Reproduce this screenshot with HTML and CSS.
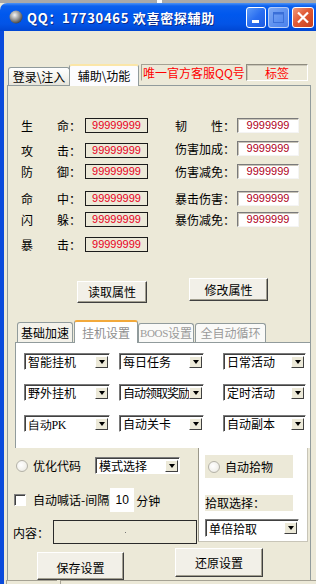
FILE: index.html
```html
<!DOCTYPE html>
<html>
<head>
    <meta charset="UTF-8">
    <link rel="stylesheet" href="styles.css">
</head>
<body>
    <div class="topstrip"><span class="handle"></span></div>

    <div class="titlebar">
        <svg class="app-icon" width="14" height="14" viewBox="0 0 14 14">
            <defs>
                <radialGradient id="ball" cx="40%" cy="35%" r="70%">
                    <stop offset="0" stop-color="#f6f6f6"/>
                    <stop offset="0.5" stop-color="#9c9c9c"/>
                    <stop offset="1" stop-color="#3a3a3a"/>
                </radialGradient>
            </defs>
            <circle cx="7" cy="7" r="6.5" fill="url(#ball)"/>
        </svg>
        <span class="title">QQ：17730465 欢喜密探辅助</span>
        <div class="caption-btns">
            <span class="cbtn cbtn-min">
                <svg width="18" height="19" viewBox="0 0 18 19"><rect x="5" y="12" width="7" height="3" fill="#fff"/></svg>
            </span>
            <span class="cbtn cbtn-max">
                <svg width="19" height="19" viewBox="0 0 19 19"><rect x="4.5" y="4.5" width="10" height="10" fill="none" stroke="#3a6fd8" stroke-width="1"/><rect x="4.5" y="4.5" width="10" height="2" fill="#3a6fd8"/></svg>
            </span>
            <span class="cbtn cbtn-close">
                <svg width="20" height="19" viewBox="0 0 20 19"><path d="M5 4.5 L15 14.5 M15 4.5 L5 14.5" stroke="#fff" stroke-width="2.2"/></svg>
            </span>
        </div>
    </div>

    <div class="client">
        <div class="tabs">
            <span class="tab">登录\注入</span>
            <span class="tab tab-active">辅助\功能</span>
            <span class="qq-label">唯一官方客服QQ号</span>
            <span class="tag-box">标签</span>
        </div>

        <div class="panel">
            <div class="stats">
                <div class="stat-col stat-left">
                    <div class="stat-row"><span class="stat-name spread"><i>生</i><i>命：</i></span><span class="val-box">99999999</span></div>
                    <div class="stat-row"><span class="stat-name spread"><i>攻</i><i>击：</i></span><span class="val-box">99999999</span></div>
                    <div class="stat-row"><span class="stat-name spread"><i>防</i><i>御：</i></span><span class="val-box">99999999</span></div>
                    <div class="stat-row"><span class="stat-name spread"><i>命</i><i>中：</i></span><span class="val-box">99999999</span></div>
                    <div class="stat-row"><span class="stat-name spread"><i>闪</i><i>躲：</i></span><span class="val-box">99999999</span></div>
                    <div class="stat-row"><span class="stat-name spread"><i>暴</i><i>击：</i></span><span class="val-box">99999999</span></div>
                </div>
                <div class="stat-col stat-right">
                    <div class="stat-row"><span class="stat-name spread"><i>韧</i><i>性：</i></span><span class="edit-box">9999999</span></div>
                    <div class="stat-row"><span class="stat-name">伤害加成：</span><span class="edit-box">9999999</span></div>
                    <div class="stat-row"><span class="stat-name">伤害减免：</span><span class="edit-box">9999999</span></div>
                    <div class="stat-row"><span class="stat-name">暴击伤害：</span><span class="edit-box">9999999</span></div>
                    <div class="stat-row"><span class="stat-name">暴伤减免：</span><span class="edit-box">9999999</span></div>
                </div>
            </div>

            <div class="attr-btns">
                <span class="btn btn-read">读取属性</span>
                <span class="btn btn-write">修改属性</span>
            </div>

            <div class="subtabs">
                <span class="subtab">基础加速</span>
                <span class="subtab subtab-active">挂机设置</span>
                <span class="subtab subtab-dim"><span class="latin">BOOS</span>设置</span>
                <span class="subtab subtab-dim subtab-wide">全自动循环</span>
            </div>

            <div class="subpanel">
                <div class="combo-row">
                    <div class="combo c1"><span class="combo-text">智能挂机</span><span class="combo-arrow"></span></div>
                    <div class="combo c2"><span class="combo-text">每日任务</span><span class="combo-arrow"></span></div>
                    <div class="combo c3"><span class="combo-text">日常活动</span><span class="combo-arrow"></span></div>
                </div>
                <div class="combo-row">
                    <div class="combo c1"><span class="combo-text">野外挂机</span><span class="combo-arrow"></span></div>
                    <div class="combo c2"><span class="combo-text tight">自动领取奖励</span><span class="combo-arrow"></span></div>
                    <div class="combo c3"><span class="combo-text">定时活动</span><span class="combo-arrow"></span></div>
                </div>
                <div class="combo-row">
                    <div class="combo c1"><span class="combo-text"><span class="latin">自动PK</span></span><span class="combo-arrow"></span></div>
                    <div class="combo c2"><span class="combo-text">自动关卡</span><span class="combo-arrow"></span></div>
                    <div class="combo c3"><span class="combo-text">自动副本</span><span class="combo-arrow"></span></div>
                </div>
            </div>

            <div class="bottom">
                <div class="bottom-left">
                    <div class="opt-row">
                        <span class="radio"></span>
                        <span class="opt-text">优化代码</span>
                        <div class="combo c-mode"><span class="combo-text">模式选择</span><span class="combo-arrow"></span></div>
                    </div>
                    <div class="shout-row">
                        <span class="checkbox"></span>
                        <span class="opt-text">自动喊话-间隔</span>
                        <span class="num-input">10</span>
                        <span class="unit">分钟</span>
                    </div>
                    <div class="content-row">
                        <span>内容：</span>
                        <span class="content-box"><i class="dot"></i></span>
                    </div>
                </div>
                <div class="pick-group">
                    <div class="pick-radio"><span class="radio"></span><span class="opt-text">自动拾物</span></div>
                    <div class="pick-label">拾取选择：</div>
                    <div class="combo c-pick"><span class="combo-text">单倍拾取</span><span class="combo-arrow"></span></div>
                </div>
            </div>

            <div class="save-row">
                <span class="btn btn-save">保存设置</span>
                <span class="btn btn-reset">还原设置</span>
            </div>
        </div>

        <div class="statusbar">
            <span class="pane pane-first"></span>
            <span class="pane"></span>
        </div>
    </div>
</body>
</html>
```

FILE: styles.css
```css
* {
    box-sizing: border-box;
}

body {
    width: 316px;
    height: 584px;
    margin: 0;
    overflow: hidden;
    background: #ece9d8;
    font-family: "Noto Sans CJK SC", "Liberation Sans", sans-serif;
    font-size: 12px;
    color: #000;
}

i {
    font-style: normal;
}

/* strip above the window */
.topstrip {
    height: 3px;
    background: #a9a9a9;
}

.handle {
    display: block;
    width: 5px;
    height: 3px;
    margin-left: 157px;
    background: #fff;
}

/* title bar */
.titlebar {
    height: 28px;
    display: flex;
    align-items: center;
    padding-left: 9px;
    background: linear-gradient(to bottom, #4d93f6 0, #0c61ee 3px, #0058ee 40%, #0354e6 75%, #0046d2 100%);
    border-top-left-radius: 7px;
}

.app-icon {
    flex: none;
}

.title {
    margin-left: 4px;
    color: #fff;
    font-weight: bold;
    font-size: 13px;
    letter-spacing: 0.7px;
    white-space: nowrap;
    text-shadow: 1px 1px 0 #0a2a8c;
}

.caption-btns {
    margin-left: auto;
    display: flex;
    padding-right: 2px;
}

.cbtn {
    height: 21px;
    border: 1px solid #fff;
    border-radius: 3px;
    display: flex;
    align-items: center;
    justify-content: center;
}

.cbtn-min {
    width: 20px;
    background: linear-gradient(135deg, #5d9bf8 0%, #2a6ef0 50%, #1d5ae0 100%);
}

.cbtn-max {
    width: 21px;
    margin-left: 2px;
    border-color: rgba(255,255,255,0.55);
    background: linear-gradient(135deg, #7fa9f2 0%, #5b8ff0 60%, #4c82ec 100%);
}

.cbtn-close {
    width: 22px;
    margin-left: 3px;
    background: linear-gradient(135deg, #f09a7c 0%, #e05a36 45%, #c8401c 100%);
}

/* client area */
.client {
    height: 553px;
    border-left: 4px solid #0a4bdc;
    display: flex;
    flex-direction: column;
}

.tabs {
    height: 21px;
    margin: 33px 0 0 4px;
    display: flex;
    align-items: flex-end;
}

.tab {
    width: 62px;
    height: 18px;
    border: 1px solid #919b9c;
    border-bottom: none;
    border-radius: 3px 3px 0 0;
    background: linear-gradient(to bottom, #fff 0%, #f3f2ec 60%, #e6e4da 100%);
    display: flex;
    align-items: center;
    justify-content: center;
    line-height: 14px;
}

.tab-active {
    width: 70px;
    height: 22px;
    margin-left: -1px;
    margin-bottom: -1px;
    position: relative;
    z-index: 1;
    background: #fcfcfe;
    border-top: 2px solid #fbe6a8;
}

.qq-label {
    align-self: flex-start;
    width: 100px;
    height: 17px;
    margin-left: 2px;
    padding-left: 1px;
    border: 1px solid;
    border-color: #a5a294 #ece9d8 #ece9d8 #a5a294;
    color: #f00;
    line-height: 15px;
    white-space: nowrap;
}

.tag-box {
    align-self: flex-start;
    width: 62px;
    height: 17px;
    margin-left: 5px;
    border: 1px solid;
    border-color: #8e8b7e #fff #fff #8e8b7e;
    box-shadow: inset 1px 1px 0 #c9c6b8;
    color: #f00;
    text-align: center;
    line-height: 15px;
}

.panel {
    width: 304px;
    height: 495px;
    margin-left: 3px;
    border: 1px solid #919b9c;
    border-bottom: none;
    overflow: hidden;
}

/* attribute readout */
.stats {
    display: flex;
    padding: 32px 0 0 13px;
}

.stat-right {
    margin-left: 27px;
}

.stat-row {
    height: 15px;
    display: flex;
    align-items: center;
}

.stat-left .stat-row:nth-child(2),
.stat-left .stat-row:nth-child(6) {
    margin-top: 10px;
}

.stat-left .stat-row:nth-child(3),
.stat-left .stat-row:nth-child(5),
.stat-right .stat-row:nth-child(5) {
    margin-top: 6px;
}

.stat-left .stat-row:nth-child(4),
.stat-right .stat-row:nth-child(4) {
    margin-top: 12px;
}

.stat-right .stat-row:nth-child(2),
.stat-right .stat-row:nth-child(3) {
    margin-top: 8px;
}

.stat-name {
    width: 60px;
    line-height: 15px;
    white-space: nowrap;
}

.spread {
    display: flex;
    justify-content: space-between;
}

.val-box {
    width: 63px;
    height: 15px;
    margin-left: 4px;
    border: 1px solid #1c1c1c;
    color: #e8001c;
    font-family: "Liberation Sans", sans-serif;
    font-size: 11px;
    line-height: 13px;
    text-align: center;
}

.edit-box {
    width: 62px;
    height: 15px;
    margin-left: 2px;
    border: 1px solid;
    border-color: #7a7a7a #f4f4f4 #f4f4f4 #7a7a7a;
    box-shadow: inset 1px 1px 0 #c8c4b8;
    background: #fff;
    color: #b0001a;
    font-family: "Liberation Sans", sans-serif;
    font-size: 11px;
    line-height: 13px;
    text-align: center;
}

/* classic push buttons */
.btn {
    display: flex;
    align-items: center;
    justify-content: center;
    background: #f2f0e8;
    border: 1px solid;
    border-color: #fff #404040 #404040 #fff;
    box-shadow: inset -1px -1px 0 #a29f90;
    line-height: 14px;
}

.attr-btns {
    display: flex;
    align-items: flex-start;
    margin-top: 26px;
    padding-left: 69px;
}

.btn-read {
    width: 70px;
    height: 22px;
    margin-top: 3px;
}

.btn-write {
    width: 79px;
    height: 23px;
    margin-left: 42px;
}

/* inner tab strip */
.subtabs {
    height: 22px;
    margin-top: 17px;
    padding-left: 9px;
    display: flex;
    align-items: flex-end;
}

.subtab {
    width: 56px;
    height: 20px;
    border: 1px solid #919b9c;
    border-bottom: none;
    border-radius: 3px 3px 0 0;
    background: #f4f2ea;
    display: flex;
    align-items: center;
    justify-content: center;
    line-height: 14px;
    white-space: nowrap;
}

.subtab-active {
    width: 64px;
    height: 23px;
    margin-left: 1px;
    margin-bottom: -1px;
    position: relative;
    z-index: 1;
    background: #fff;
    border-top: 2px solid #f2a93b;
    color: #8e8e8e;
}

.subtab-dim {
    width: 56px;
    height: 19px;
    background: #fafaf8;
    color: #9a9a9a;
}

.subtab-wide {
    width: 71px;
    margin-left: 1px;
}

.latin {
    font-family: "Liberation Serif", serif;
    font-size: 11px;
    letter-spacing: -0.3px;
}

.subpanel {
    width: 297px;
    height: 106px;
    margin-left: 7px;
    padding: 10px 0 0 8px;
    border: 1px solid #919b9c;
    border-bottom: none;
    background: #fff;
}

.combo-row {
    display: flex;
}

.combo-row + .combo-row {
    margin-top: 14px;
}

/* drop-down lists */
.combo {
    height: 17px;
    display: flex;
    align-items: center;
    padding: 0 1px 0 3px;
    background: #fff;
    border: 1px solid;
    border-color: #7a7a7a #fff #fff #7a7a7a;
    box-shadow: inset 1px 1px 0 #404040;
}

.c1 {
    width: 86px;
}

.c2 {
    width: 85px;
    margin-left: 9px;
}

.c3 {
    width: 83px;
    margin-left: 19px;
}

.combo-text {
    flex: 1;
    min-width: 0;
    height: 15px;
    overflow: hidden;
    white-space: nowrap;
    line-height: 15px;
}

.combo-text .latin {
    font-size: 12px;
}

.tight {
    letter-spacing: -1px;
}

.combo-arrow {
    width: 13px;
    height: 12px;
    flex: none;
    display: flex;
    align-items: center;
    justify-content: center;
    background: #ece9d8;
    border: 1px solid;
    border-color: #fff #404040 #404040 #fff;
}

.combo-arrow::before {
    content: "";
    border-left: 3.5px solid transparent;
    border-right: 3.5px solid transparent;
    border-top: 4px solid #000;
}

/* lower settings */
.bottom {
    height: 96px;
    display: flex;
}

.bottom-left {
    width: 190px;
}

.opt-row {
    height: 17px;
    margin-top: 9px;
    padding-left: 8px;
    display: flex;
    align-items: center;
}

.radio {
    width: 12px;
    height: 12px;
    flex: none;
    border: 1px solid #b4b2a8;
    border-radius: 50%;
    background: radial-gradient(circle at 40% 40%, #fff 0%, #f2f1ec 60%, #dedcd2 100%);
}

.opt-text {
    margin-left: 5px;
    line-height: 14px;
    white-space: nowrap;
}

.c-mode {
    width: 85px;
    margin-left: 14px;
}

.shout-row {
    height: 24px;
    margin-top: 14px;
    padding-left: 6px;
    display: flex;
    align-items: center;
}

.checkbox {
    width: 12px;
    height: 12px;
    flex: none;
    margin-right: 2px;
    background: #fff;
    border: 1px solid;
    border-color: #808080 #fff #fff #808080;
    box-shadow: inset 1px 1px 0 #404040;
}

.num-input {
    width: 24px;
    height: 24px;
    margin-left: 1px;
    background: #fff;
    font-family: "Liberation Sans", sans-serif;
    font-size: 12px;
    line-height: 24px;
    text-align: center;
}

.unit {
    margin-left: 2px;
}

.content-row {
    height: 24px;
    margin-top: 8px;
    padding-left: 5px;
    display: flex;
    align-items: center;
}

.content-box {
    width: 144px;
    height: 24px;
    margin-left: 4px;
    border: 1px solid #2a2a2a;
    display: flex;
    align-items: center;
    justify-content: center;
}

.dot {
    width: 1px;
    height: 1px;
    background: #777;
}

.pick-group {
    width: 110px;
    height: 94px;
    padding: 7px 0 0 6px;
    background: #fff;
    border-left: 1px solid #9a978a;
    border-bottom: 1px solid #c8c5b8;
    border-right: 1px solid #c8c5b8;
}

.pick-radio {
    width: 88px;
    height: 23px;
    padding-left: 3px;
    display: flex;
    align-items: center;
    background: #ece9d8;
}

.pick-label {
    width: 88px;
    height: 16px;
    margin-top: 17px;
    background: #ece9d8;
    line-height: 16px;
}

.c-pick {
    width: 94px;
    height: 18px;
    margin-top: 8px;
}

.save-row {
    display: flex;
    align-items: flex-start;
    margin-top: 4px;
    padding-left: 29px;
}

.btn-save {
    width: 87px;
    height: 28px;
    margin-top: 4px;
    padding-top: 4px;
}

.btn-reset {
    width: 88px;
    height: 29px;
    margin-left: 51px;
}

/* status bar */
.statusbar {
    flex: 1;
    display: flex;
    padding-left: 2px;
}

.pane {
    flex: 1;
    border-top: 1px solid #a5a294;
    border-left: 1px solid #a5a294;
}

.pane-first {
    flex: none;
    width: 51px;
    margin-right: 3px;
}
```
